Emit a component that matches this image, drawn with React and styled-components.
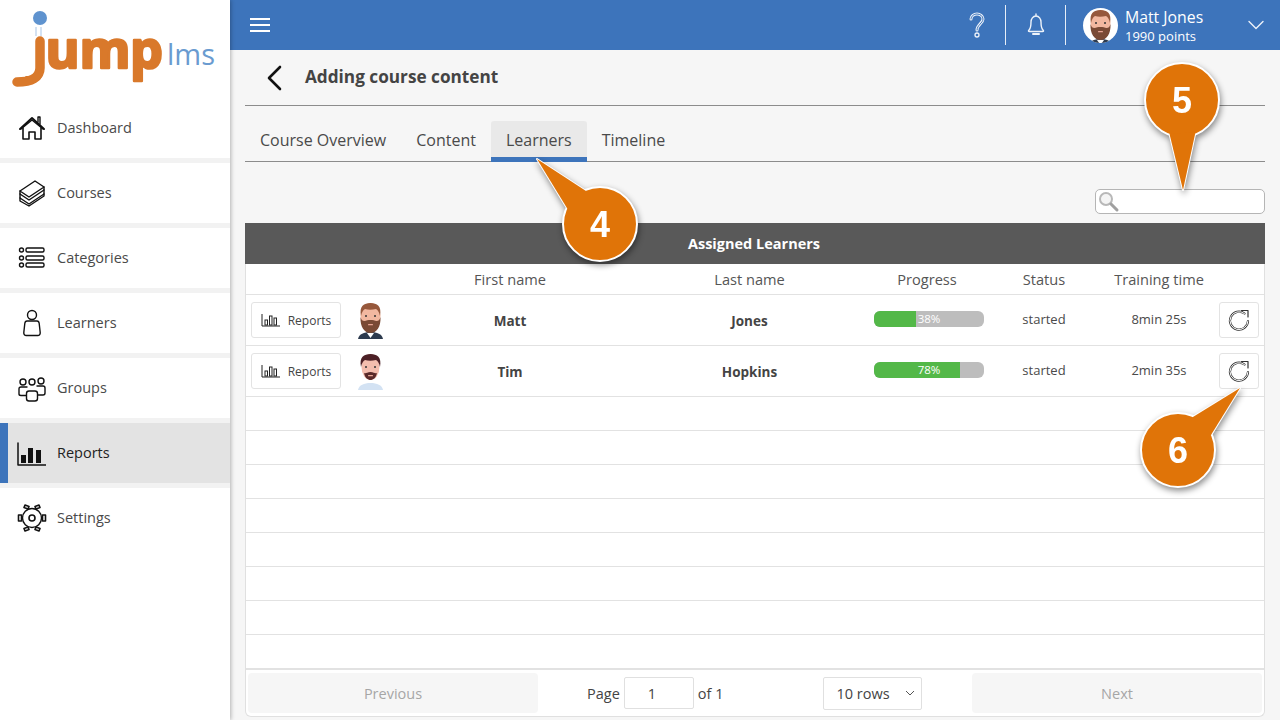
import React from "react";
import styled, { createGlobalStyle } from "styled-components";

const Global = createGlobalStyle`
  html, body { margin: 0; padding: 0; height: 100%; }
  body { font-family: "Open Sans", "Liberation Sans", sans-serif; color: #444; background: #f6f6f6; overflow: hidden; }
  * { box-sizing: border-box; }
`;

const Page = styled.div`
  position: relative;
  display: flex;
  width: 1280px;
  height: 720px;
  overflow: hidden;
`;

/* sidebar */
const Sidebar = styled.aside`
  width: 230px;
  flex: none;
  background: #fff;
  box-shadow: 1px 0 4px rgba(0, 0, 0, 0.28);
  position: relative;
  z-index: 1;
`;
const LogoWrap = styled.div`
  height: 98px;
  padding-left: 12px;
`;
const NavList = styled.nav`
  display: flex;
  flex-direction: column;
`;
const NavItem = styled.a`
  display: flex;
  align-items: center;
  height: 60px;
  padding-left: ${p => (p.$active ? "8px" : "17px")};
  gap: ${p => (p.$active ? "11px" : "10px")};
  font-size: 14.5px;
  color: ${p => (p.$active ? "#222" : "#4a4a4a")};
  background: ${p => (p.$active ? "#e3e3e3" : "#fff")};
  border-left: ${p => (p.$active ? "8px solid #3d74bb" : "0")};
  & + & { margin-top: 5px; }
  position: relative;
  &:not(:last-child)::after {
    content: "";
    position: absolute;
    left: ${p => (p.$active ? "-8px" : "0")};
    right: 0;
    bottom: -5px;
    height: 5px;
    background: #f2f2f2;
  }
`;
const NavLabel = styled.span`
  margin-top: -2px;
`;
const NavIcon = styled.svg`
  width: 30px;
  height: 30px;
  flex: none;
  fill: none;
  stroke: #111;
  stroke-width: 1.4;
  stroke-linejoin: round;
  stroke-linecap: round;
`;

/* main area */
const Main = styled.main`
  flex: 1;
  display: flex;
  flex-direction: column;
  min-width: 0;
`;
const TopBar = styled.header`
  height: 50px;
  flex: none;
  background: #3d74bb;
  display: flex;
  align-items: center;
  padding: 0 16px 0 20px;
  color: #fff;
`;
const Burger = styled.div`
  width: 20px;
  height: 14px;
  border-top: 2px solid #fff;
  border-bottom: 2px solid #fff;
  position: relative;
  &::after {
    content: "";
    position: absolute;
    left: 0;
    right: 0;
    top: 4px;
    height: 2px;
    background: #fff;
  }
`;
const TopRight = styled.div`
  margin-left: auto;
  display: flex;
  align-items: center;
  height: 40px;
`;
const TopCell = styled.div`
  width: ${p => p.$w}px;
  height: 40px;
  padding-right: ${p => p.$pr || 0}px;
  display: flex;
  align-items: center;
  justify-content: center;
  border-right: 1px solid #e6eef8;
`;
const TopIcon = styled.svg`
  fill: none;
  stroke: #eef3fa;
  stroke-width: 1.4;
  stroke-linecap: round;
  stroke-linejoin: round;
`;
const UserBlock = styled.div`
  display: flex;
  align-items: center;
  padding-left: 17px;
  gap: 7px;
`;
const UserAvatar = styled.div`
  width: 35px;
  height: 35px;
  border-radius: 50%;
  background: #fff;
  overflow: hidden;
  flex: none;
`;
const UserText = styled.div`
  width: 116px;
  padding-top: 2px;
  line-height: 1;
`;
const UserName = styled.div`
  font-size: 15.8px;
  line-height: 19px;
`;
const UserPoints = styled.div`
  margin-top: 1px;
  font-size: 13px;
  line-height: 17px;
`;

const Content = styled.div`
  flex: 1;
  padding: 0 15px 3px;
  display: flex;
  flex-direction: column;
  min-height: 0;
`;
const TitleRow = styled.div`
  height: 56px;
  flex: none;
  display: flex;
  align-items: center;
  gap: 21px;
  padding-left: 21px;
  border-bottom: 1px solid #8c8c8c;
`;
const TitleText = styled.h1`
  margin: -2px 0 0;
  font-size: 17.2px;
  font-weight: 700;
  color: #444;
`;
const Tabs = styled.div`
  height: 56px;
  flex: none;
  display: flex;
  align-items: flex-end;
  border-bottom: 1px solid #8c8c8c;
`;
const Tab = styled.div`
  height: 41px;
  padding: 2px 15px 0;
  margin-bottom: -1px;
  display: flex;
  align-items: center;
  font-size: 16px;
  color: #4a4a4a;
  background: ${p => (p.$active ? "#e9e9e9" : "transparent")};
  border-bottom: 5px solid ${p => (p.$active ? "#3d74bb" : "transparent")};
  border-radius: 3px 3px 0 0;
`;
const SearchRow = styled.div`
  height: 61px;
  flex: none;
  display: flex;
  justify-content: flex-end;
  align-items: flex-start;
  padding-top: 27px;
`;
const SearchBox = styled.div`
  width: 170px;
  height: 25px;
  background: #fff;
  border: 1px solid #b5b5b5;
  border-radius: 5px;
  padding-left: 2px;
  display: flex;
  align-items: center;
`;

const Panel = styled.section`
  flex: 1;
  display: flex;
  flex-direction: column;
  background: #fff;
  border: 1px solid #e0e0e0;
  border-top: 0;
  border-radius: 0 0 6px 6px;
  min-height: 0;
`;
const PanelTitle = styled.div`
  height: 41px;
  flex: none;
  margin: 0 -1px;
  background: #595959;
  color: #fff;
  font-size: 14.5px;
  font-weight: 700;
  display: flex;
  align-items: center;
  justify-content: center;
  padding: 0 2px 1px 0;
`;
const Row = styled.div`
  display: grid;
  grid-template-columns: 144px 240px 239px 116px 118px 112px 1fr;
  align-items: center;
  flex: none;
  height: ${p => p.$h}px;
  border-bottom: 1px solid #e2e2e2;
  font-size: 13.5px;
`;
const HeadCell = styled.div`
  text-align: center;
  font-size: 14.6px;
  color: #555;
`;
const NameCell = styled.div`
  text-align: center;
  font-weight: 700;
  font-size: 13.5px;
  color: #444;
  margin-top: 2px;
`;
const PlainCell = styled.div`
  text-align: center;
  font-size: 13px;
  color: #4a4a4a;
  margin-top: -3px;
`;
const FirstCell = styled.div`
  display: flex;
  align-items: center;
  padding-left: 5px;
  gap: 12px;
`;
const ReportsBtn = styled.button`
  width: 90px;
  height: 36px;
  flex: none;
  background: #fff;
  border: 1px solid #e3e3e3;
  border-radius: 3px;
  display: flex;
  align-items: center;
  justify-content: center;
  gap: 7px;
  font: 12px "Open Sans", sans-serif;
  color: #444;
  padding: 0;
`;
const BarTrack = styled.div`
  position: relative;
  width: 110px;
  height: 16px;
  margin-left: 5px;
  margin-top: -3px;
  background: #bdbdbd;
  border-radius: 6px;
  overflow: hidden;
`;
const BarFill = styled.div`
  height: 100%;
  background: #53b848;
`;
const BarLabel = styled.span`
  position: absolute;
  inset: 0;
  display: flex;
  align-items: center;
  justify-content: center;
  font-size: 11.5px;
  color: #fff;
`;
const ResetBtn = styled.button`
  width: 40px;
  height: 36px;
  margin-left: 4px;
  background: #fff;
  border: 1px solid #e3e3e3;
  border-radius: 3px;
  padding: 0;
  display: flex;
  align-items: center;
  justify-content: center;
`;
const Footer = styled.div`
  flex: 1;
  display: grid;
  grid-template-columns: 290px 1fr 290px;
  align-items: center;
  border-top: 1px solid #e2e2e2;
  padding: 0 2px;
`;
const PageBtn = styled.div`
  height: 40px;
  background: #f6f6f6;
  border-radius: 4px;
  display: flex;
  align-items: center;
  justify-content: center;
  font-size: 14.5px;
  color: #a6a6a6;
`;
const PageMid = styled.div`
  display: flex;
  align-items: center;
  padding-left: 49px;
  font-size: 14.5px;
  color: #444;
`;
const PageInput = styled.div`
  width: 70px;
  height: 32px;
  margin: 0 4px;
  background: #fff;
  border: 1px solid #e0e0e0;
  border-radius: 2px;
  display: flex;
  align-items: center;
  padding-left: 23px;
`;
const RowsSelect = styled.div`
  width: 99px;
  height: 33px;
  margin-left: 100px;
  background: #fff;
  border: 1px solid #e0e0e0;
  border-radius: 2px;
  display: flex;
  align-items: center;
  justify-content: space-between;
  padding: 0 6px 0 12px;
`;

/* numbered callouts lie over the page */
const Callout = styled.svg`
  position: absolute;
  left: ${p => p.$x}px;
  top: ${p => p.$y}px;
  z-index: 5;
  overflow: visible;
  filter: drop-shadow(1px 3px 3px rgba(0, 0, 0, 0.45));
`;
const CalloutNum = styled.text`
  font: 700 36px "Liberation Sans", Arial, sans-serif;
  fill: #fff;
  text-anchor: middle;
`;

function Logo() {
  return (
    <svg width="210" height="92" viewBox="0 0 210 92">
      <text x="18" y="68" fontFamily="Open Sans" fontWeight="700" fontSize="52" textLength="133" lengthAdjust="spacing"
        fill="#d9792b" stroke="#d9792b" strokeWidth="2.5" strokeLinejoin="round">jump</text>
      {/* covers the font's j, the logo has its own stem and blue ball */}
      <rect x="8" y="8" width="28" height="68" fill="#fff" />
      <path d="M28 41v27c0 9-8 14-23 14" fill="none" stroke="#d9792b" strokeWidth="9.500" strokeLinecap="round" />
      <circle cx="28" cy="18" r="7" fill="#5f93cf" />
      <path d="M24 27v9M29 27v9" stroke="#a9c5e6" strokeWidth="1" />
      <text x="155" y="65" fontFamily="Open Sans" fontSize="29" textLength="48" lengthAdjust="spacingAndGlyphs" fill="#6a9bd0">lms</text>
    </svg>
  );
}

const navIcons = {
  home: <><path d="M3 16 15 5l12 11" strokeWidth="2" /><path d="M21 9V4h2v7" /><path d="M6 15v11h6v-7h6v7h6V15" strokeWidth="1.6" /><path d="M4 16 15 7l11 9" /></>,
  books: <><path d="M3 13 18 3l9 6-15 10z" /><path d="M3 13v3l9 6 15-10V9" /><path d="M3 16v4l9 6 15-10v-4" /><path d="M3 20v3l9 5 15-10v-2" /></>,
  list: <><circle cx="4.5" cy="7" r="2" /><circle cx="4.5" cy="15" r="2" /><circle cx="4.5" cy="22" r="2" /><rect x="9" y="5" width="18" height="4" rx="1.5" /><rect x="9" y="13" width="18" height="4" rx="1.5" /><rect x="9" y="20" width="18" height="4" rx="1.5" /></>,
  person: <><circle cx="15" cy="7" r="4.5" /><path d="M10 13h10c1.5 0 2 1 2.200 2.500l1 9c.2 2-1 3-2.500 3H9.300c-1.500 0-2.700-1-2.500-3l1-9C8 14 8.500 13 10 13z" /></>,
  groups: <><circle cx="6" cy="9" r="3" /><circle cx="15" cy="9" r="3" /><circle cx="24" cy="8" r="3" /><path d="M10 14H4c-1.500 0-2 1-2 2v5c0 1 .5 1.500 2 1.500h5" /><path d="M20 13h6c1.500 0 2 1 2 2v5c0 1.500-.5 2-2 2h-5" /><path d="M12 18h6c1.500 0 2.500 1 2.500 2.500v5c0 1.500-1 2.500-2.500 2.500h-6c-1.500 0-2.500-1-2.500-2.500v-5c0-1.500 1-2.500 2.500-2.500z" fill="#fff" /></>,
  bars: <><path d="M2 5v22h28" strokeWidth="1.500" /><rect x="5" y="17" width="5" height="8" fill="#111" stroke="none" /><rect x="12" y="10" width="5" height="15" fill="#111" stroke="none" /><rect x="20" y="12" width="5" height="13" fill="#111" stroke="none" /></>,
  gear: <><circle cx="15" cy="15" r="9.500" /><circle cx="15" cy="15" r="3" strokeWidth="1.600" /><rect x="1.500" y="12" width="3" height="6" strokeWidth="1.600" /><rect x="25.500" y="12" width="3" height="6" strokeWidth="1.600" /><path d="m8 2 4 1.500-1 2.500-4-1.500zM22 2l-4 1.500 1 2.500 4-1.500zM8 28l4-1.500-1-2.500-4 1.500zM22 28l-4-1.500 1-2.500 4 1.500z" strokeWidth="1.600" /></>,
};

function Nav({ icon, label, active }) {
  return (
    <NavItem $active={active}>
      <NavIcon viewBox="0 0 30 30">{navIcons[icon]}</NavIcon>
      <NavLabel>{label}</NavLabel>
    </NavItem>
  );
}

function Face({ hair, beard, body, skin, goatee }) {
  return (
    <svg width="35" height="38" viewBox="0 0 35 38">
      <path d="M5 38c1-5 6-7 12.500-7S29 33 30 38z" fill={body} />
      {!goatee && <path d="M14 32h7l-3.500 5z" fill="#fff" />}
      <ellipse cx="17.500" cy="15" rx={goatee ? 9 : 10} ry="13" fill={skin} />
      <path d="M8 15C6 5 11 2 17.500 2S29 5 27 15c-1-4-2-6-4-7-4 1-8 1-11 0-2 1-3 3-4 7z" fill={hair} />
      {goatee
        ? <path d="M11 21c2 1 3-1 6.500-1s4.500 2 6.500 1c-1 5-4 7-6.500 7S12 26 11 21z" fill={beard} />
        : <path d="M7.500 16c1 3 2 4 4 4 3-1.500 9-1.500 12 0 2 0 3-1 4-4 .5 10-4 16-10 16S7 26 7.500 16z" fill={beard} />}
      <circle cx="13" cy="15" r="1" fill="#333" />
      <circle cx="22" cy="15" r="1" fill="#333" />
      <rect x="15" y="23" width="5" height="1.300" rx=".6" fill="#e8a594" />
    </svg>
  );
}

function BarsSmall() {
  return (
    <svg width="20" height="14" viewBox="0 0 20 14" fill="none" stroke="#222" strokeWidth="1">
      <path d="M1 1v12h18" />
      <rect x="4" y="7" width="2.500" height="5" />
      <rect x="8.500" y="3" width="2.500" height="9" />
      <rect x="13" y="5" width="2.500" height="7" />
    </svg>
  );
}

function Reset() {
  return (
    <svg width="24" height="24" viewBox="0 0 24 24" fill="none" strokeLinecap="round">
      <path d="M17.500 5.500A9 9 0 1 0 21 13" stroke="#333" strokeWidth="2.200" />
      <path d="M17.500 5.500A9 9 0 1 0 21 13" stroke="#fff" strokeWidth="1" />
      <path d="M14.500 2.500h6.500v6.500" stroke="#333" strokeWidth="1.200" strokeLinejoin="round" />
    </svg>
  );
}

function Pin({ x, y, tipX, tipY, num }) {
  // coordinates are local to an 80px box around the circle, tail points at the tip
  const cx = 40, cy = 40, r = 37;
  const dx = tipX - x - cx, dy = tipY - y - cy;
  const len = Math.hypot(dx, dy);
  const ux = dx / len, uy = dy / len;
  const w = 13;
  const bx = cx + ux * (r - 4), by = cy + uy * (r - 4);
  const tail = `${bx - uy * w},${by + ux * w} ${tipX - x},${tipY - y} ${bx + uy * w},${by - ux * w}`;
  return (
    <Callout $x={x} $y={y} width="80" height="80" viewBox="0 0 80 80">
      <polygon points={tail} fill="#e07408" stroke="#fff" strokeWidth="2" strokeLinejoin="round" />
      <circle cx={cx} cy={cy} r={r} fill="#e07408" stroke="#fff" strokeWidth="2" />
      <polygon points={tail} fill="#e07408" />
      <CalloutNum x={cx} y={cy + 13}>{num}</CalloutNum>
    </Callout>
  );
}

const learners = [
  { first: "Matt", last: "Jones", progress: 38, time: "8min 25s", hair: "#96583c", beard: "#7a4a35", body: "#2c3a4e", skin: "#f2b8a0" },
  { first: "Tim", last: "Hopkins", progress: 78, time: "2min 35s", hair: "#4c2026", beard: "#5a2a2a", body: "#d3e2f3", skin: "#f4bdae", goatee: true },
];

export default function App() {
  return (
    <Page>
      <Global />
      <Sidebar>
        <LogoWrap><Logo /></LogoWrap>
        <NavList>
          <Nav icon="home" label="Dashboard" />
          <Nav icon="books" label="Courses" />
          <Nav icon="list" label="Categories" />
          <Nav icon="person" label="Learners" />
          <Nav icon="groups" label="Groups" />
          <Nav icon="bars" label="Reports" active />
          <Nav icon="gear" label="Settings" />
        </NavList>
      </Sidebar>
      <Main>
        <TopBar>
          <Burger />
          <TopRight>
            <TopCell $w={44} $pr={14}>
              <TopIcon width="20" height="28" viewBox="0 0 20 28">
                <path d="M4 8c0-3 3-5 6-5s6 2 6 5c0 4-6 6-6 11" stroke="#eef3fa" strokeWidth="3" />
                <path d="M4 8c0-3 3-5 6-5s6 2 6 5c0 4-6 6-6 11" stroke="#3d74bb" strokeWidth="1" />
                <circle cx="10" cy="24" r="2" strokeWidth="1.300" />
              </TopIcon>
            </TopCell>
            <TopCell $w={60}>
              <TopIcon width="22" height="24" viewBox="0 0 22 24">
                <path d="M11 1v2M4 17c2-2 2-5 2-8 0-3 2-6 5-6s5 3 5 6c0 3 0 6 2 8 1 1 .5 1.500-.5 1.500h-13C3.500 18.500 3 18 4 17z" />
                <path d="M8 21h6" strokeWidth="2" />
              </TopIcon>
            </TopCell>
            <UserBlock>
              <UserAvatar>
                <Face hair="#96583c" beard="#7a4a35" body="#2c3a4e" skin="#f2b8a0" />
              </UserAvatar>
              <UserText>
                <UserName>Matt Jones</UserName>
                <UserPoints>1990 points</UserPoints>
              </UserText>
              <TopIcon width="16" height="10" viewBox="0 0 16 10">
                <path d="m1 1.500 7 7 7-7" />
              </TopIcon>
            </UserBlock>
          </TopRight>
        </TopBar>
        <Content>
          <TitleRow>
            <svg width="18" height="26" viewBox="0 0 18 26" fill="none" stroke="#111" strokeWidth="2.600" strokeLinecap="round" strokeLinejoin="round">
              <path d="M14 2 3 13l11 11" />
            </svg>
            <TitleText>Adding course content</TitleText>
          </TitleRow>
          <Tabs>
            <Tab>Course Overview</Tab>
            <Tab>Content</Tab>
            <Tab $active>Learners</Tab>
            <Tab>Timeline</Tab>
          </Tabs>
          <SearchRow>
            <SearchBox>
              <svg width="22" height="22" viewBox="0 0 22 22" fill="none">
                <circle cx="8" cy="8" r="6" fill="#f4f4f4" stroke="#b8b8b8" strokeWidth="2" />
                <path d="m13 13 6 6" stroke="#a0a0a0" strokeWidth="3" strokeLinecap="round" />
              </svg>
            </SearchBox>
          </SearchRow>
          <Panel>
            <PanelTitle>Assigned Learners</PanelTitle>
            <Row $h={31}>
              <span />
              <HeadCell>First name</HeadCell>
              <HeadCell>Last name</HeadCell>
              <HeadCell>Progress</HeadCell>
              <HeadCell>Status</HeadCell>
              <HeadCell>Training time</HeadCell>
              <span />
            </Row>
            {learners.map(l => (
              <Row $h={51} key={l.first}>
                <FirstCell>
                  <ReportsBtn><BarsSmall />Reports</ReportsBtn>
                  <Face hair={l.hair} beard={l.beard} body={l.body} skin={l.skin} goatee={l.goatee} />
                </FirstCell>
                <NameCell>{l.first}</NameCell>
                <NameCell>{l.last}</NameCell>
                <div>
                  <BarTrack>
                    <BarFill style={{ width: `${l.progress}%` }} />
                    <BarLabel>{l.progress}%</BarLabel>
                  </BarTrack>
                </div>
                <PlainCell>started</PlainCell>
                <PlainCell>{l.time}</PlainCell>
                <ResetBtn><Reset /></ResetBtn>
              </Row>
            ))}
            {Array.from({ length: 8 }).map((_, i) => <Row $h={34} key={i} />)}
            <Footer>
              <PageBtn>Previous</PageBtn>
              <PageMid>
                <span>Page</span>
                <PageInput>1</PageInput>
                <span>of 1</span>
                <RowsSelect>
                  10 rows
                  <svg width="10" height="6" viewBox="0 0 10 6" fill="none" stroke="#555"><path d="m1 1 4 4 4-4" /></svg>
                </RowsSelect>
              </PageMid>
              <PageBtn>Next</PageBtn>
            </Footer>
          </Panel>
        </Content>
      </Main>
      <Pin x={560} y={184} tipX={537} tipY={159} num="4" />
      <Pin x={1142} y={60} tipX={1183} tipY={190} num="5" />
      <Pin x={1138} y={410} tipX={1240} tipY={388} num="6" />
    </Page>
  );
}
